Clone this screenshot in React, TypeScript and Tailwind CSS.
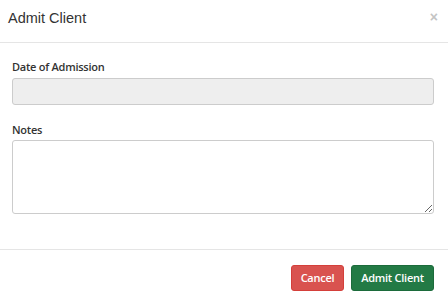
export default function App() {
  return (
    <div className="w-[448px] h-[302px] bg-white flex flex-col font-['Liberation_Sans',Arial,sans-serif] text-[#333]">
      {/* Header */}
      <div className="h-[43px] border-b border-[#e5e5e5] flex items-center justify-between pl-[8px] pr-[10px]">
        <h4 className="text-[14.5px] leading-none mt-[-5px]">Admit Client</h4>
        <button className="text-[#c4c4c4] text-[14px] leading-none font-bold mt-[-8px]">×</button>
      </div>

      {/* Body */}
      <div className="flex flex-col px-[12px] pt-[15px] font-['Open_Sans','Noto_Sans',sans-serif]">
        <label className="text-[11px] font-semibold tracking-[-0.25px] leading-[17px]">Date of Admission</label>
        <div className="mt-[3px] h-[27px] w-[422px] rounded-[3px] border border-[#ccc] bg-[#eee]" />
        <label className="mt-[16px] text-[11px] font-semibold tracking-[-0.25px] leading-[17px]">Notes</label>
        <textarea className="mt-[2px] h-[74px] w-[422px] rounded-[3px] border border-[#ccc] bg-white resize-y" />
      </div>

      {/* Footer */}
      <div className="mt-[35px] border-t border-[#e5e5e5] flex justify-end gap-[7px] pt-[15px] pr-[14px] font-['Open_Sans','Noto_Sans',sans-serif]">
        <button className="h-[26px] w-[53px] rounded-[3px] bg-[#d9534f] border border-[#d43f3a] text-white text-[11px] font-semibold tracking-[-0.25px]">
          Cancel
        </button>
        <button className="h-[26px] w-[83px] rounded-[3px] bg-[#237a45] border border-[#1c6b3b] text-white text-[11px] font-semibold tracking-[-0.25px]">
          Admit Client
        </button>
      </div>
    </div>
  );
}
